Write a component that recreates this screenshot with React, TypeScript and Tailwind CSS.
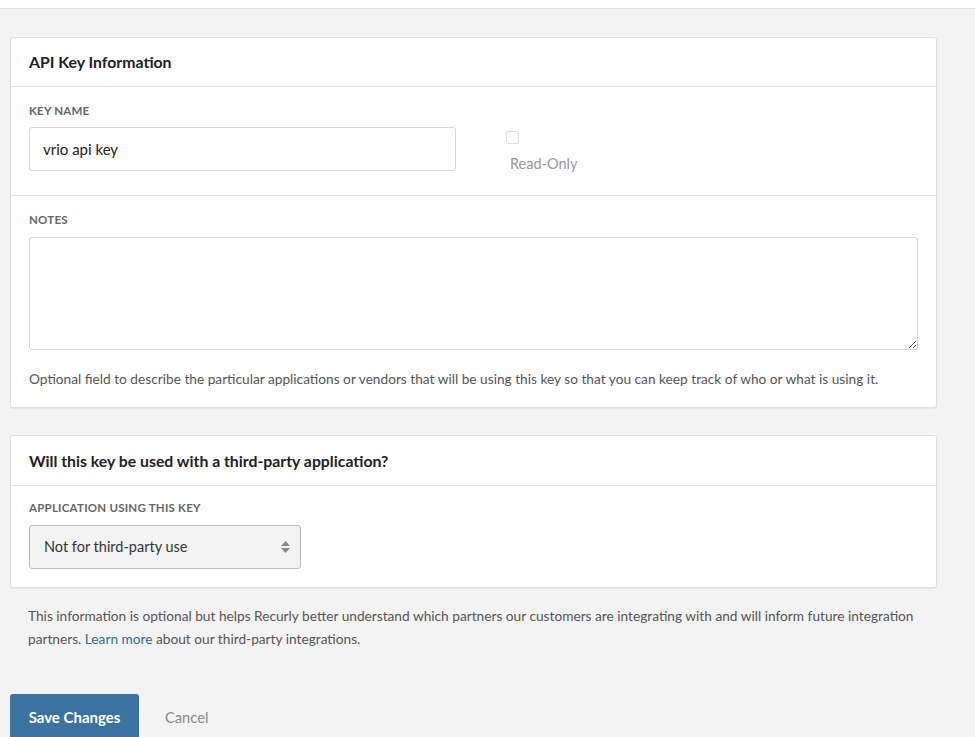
import { useState } from 'react'

const font = { fontFamily: 'Lato, "Noto Sans", sans-serif' }

function Label({ children }: { children: React.ReactNode }) {
  return (
    <div className="text-[11.5px] font-bold uppercase tracking-[0.02em] text-[#666]">{children}</div>
  )
}

export default function App() {
  const [name, setName] = useState('vrio api key')
  const [notes, setNotes] = useState('')
  const [readOnly, setReadOnly] = useState(false)

  return (
    <div className="min-h-screen bg-[#f3f3f3] text-[#333]" style={font}>
      {/* top bar */}
      <div className="h-[9px] bg-white border-b border-[#e2e2e2]" />

      <div className="pl-[10px] pr-[38px] pt-[28px]">
        {/* API key info card */}
        <div className="bg-white border border-[#dedede] rounded-[3px] shadow-[0_1px_1px_rgba(0,0,0,0.06)]">
          <div className="h-[49px] flex items-center px-[18px] border-b border-[#e2e2e2]">
            <h2 className="text-[15.8px] font-bold text-[#222]">API Key Information</h2>
          </div>

          <div className="px-[18px] pt-[15px] pb-[20px] border-b border-[#e2e2e2]">
            <Label>Key Name</Label>
            <div className="flex mt-[8px]">
              <input
                value={name}
                onChange={(e) => setName(e.target.value)}
                className="w-[427px] h-[44px] border border-[#d6d6d6] rounded-[3px] px-[13px] text-[15px] text-[#222] outline-none"
              />
              <label className="ml-[50px] pt-[4px] flex flex-col">
                <input
                  type="checkbox"
                  checked={readOnly}
                  onChange={(e) => setReadOnly(e.target.checked)}
                  className="appearance-none w-[13px] h-[13px] border border-[#ddd] rounded-[2px] bg-[#fafafa]"
                />
                <span className="mt-[9px] pl-[4px] text-[14.5px] text-[#999]">Read-Only</span>
              </label>
            </div>
          </div>

          <div className="px-[18px] pt-[15px] pb-[17px]">
            <Label>Notes</Label>
            <textarea
              value={notes}
              onChange={(e) => setNotes(e.target.value)}
              className="block mt-[9px] w-full h-[113px] border border-[#d6d6d6] rounded-[3px] p-[10px] text-[14px] outline-none"
            />
            <p className="mt-[19px] text-[13.7px] text-[#555]">
              Optional field to describe the particular applications or vendors that will be using this key so that you can keep track of who or what is using it.
            </p>
          </div>
        </div>

        {/* third party card */}
        <div className="mt-[27px] bg-white border border-[#dedede] rounded-[3px] shadow-[0_1px_1px_rgba(0,0,0,0.06)]">
          <div className="h-[50px] flex items-center px-[18px] pt-[2px] border-b border-[#e2e2e2]">
            <h2 className="text-[15.8px] font-bold text-[#222]">Will this key be used with a third-party application?</h2>
          </div>
          <div className="px-[18px] pt-[13px] pb-[18px]">
            <Label>Application using this key</Label>
            <div className="mt-[9px] relative w-[272px]">
              <select className="appearance-none w-full h-[44px] bg-[#f3f3f3] border border-[#bdbdbd] rounded-[3px] pl-[14px] pr-[30px] text-[14.5px] text-[#333] outline-none">
                <option>Not for third-party use</option>
              </select>
              <svg className="absolute right-[11px] top-[16px] pointer-events-none" width="9" height="12" viewBox="0 0 9 12">
                <path d="M4.5 0 L9 5 H0 Z" fill="#888" />
                <path d="M4.5 12 L9 7 H0 Z" fill="#888" />
              </svg>
            </div>
          </div>
        </div>

        <p className="mt-[16px] pl-[18px] pr-[20px] text-[13.7px] leading-[23px] text-[#555]">
          This information is optional but helps Recurly better understand which partners our customers are integrating with and will inform future integration partners.{' '}
          <a href="#" className="text-[#2e6d9e]">Learn more</a> about our third-party integrations.
        </p>

        <div className="mt-[44px] flex items-center">
          <button className="h-[46px] w-[129px] bg-[#3a72a0] text-white text-[15px] font-bold rounded-[3px]">
            Save Changes
          </button>
          <button className="ml-[26px] text-[14.7px] text-[#888]">Cancel</button>
        </div>
      </div>
    </div>
  )
}
